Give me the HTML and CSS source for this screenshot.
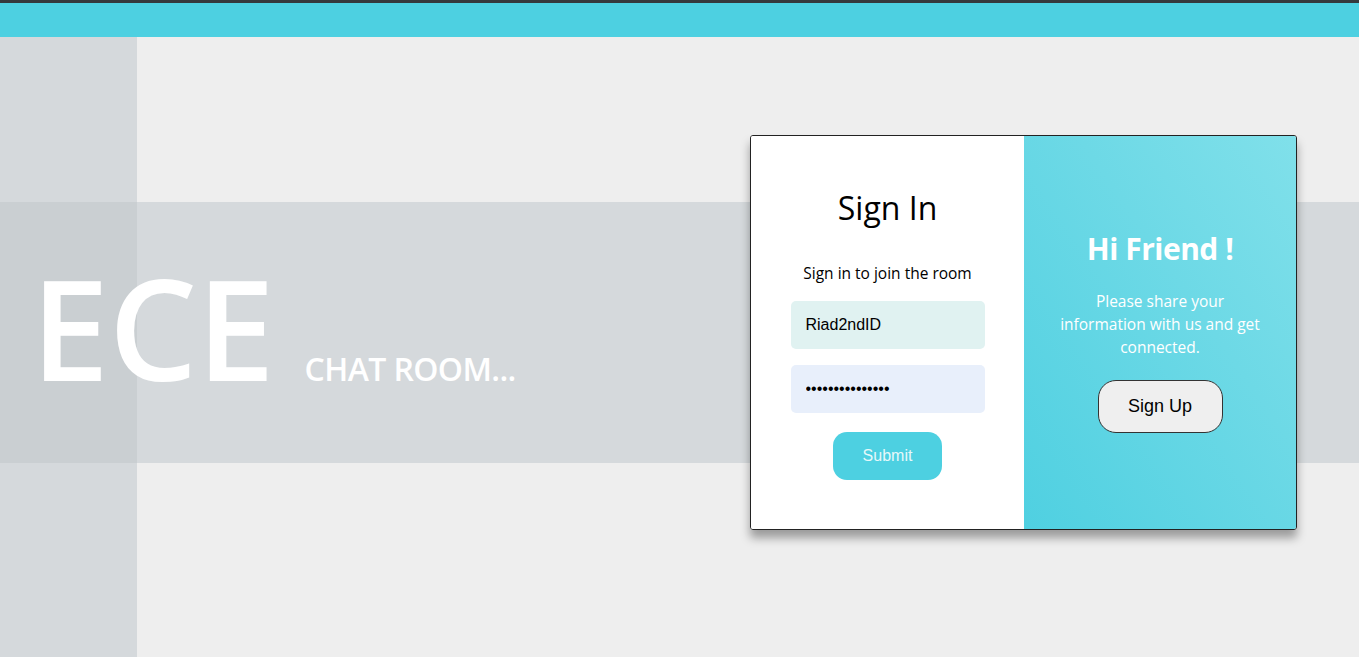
FILE: index.html
```html
<!DOCTYPE html>
<html lang="en">
<head>
<meta charset="utf-8">
<title>ECE Chat Room</title>
<link rel="stylesheet" href="styles.css">
</head>
<body>
<header class="topbar"></header>
<main class="main">
  <div class="hero">
    <span class="hero-big">ECE</span>
    <span class="hero-small">CHAT ROOM...</span>
  </div>
  <div class="card">
    <form class="panel panel-signin">
      <h1 class="signin-title">Sign In</h1>
      <p class="signin-sub">Sign in to join the room</p>
      <input class="field field-user" type="text" value="Riad2ndID">
      <input class="field field-pass" type="password" value="123456789012345">
      <button class="btn-submit" type="button">Submit</button>
    </form>
    <div class="panel panel-signup">
      <h2 class="signup-title">Hi Friend !</h2>
      <p class="signup-text">Please share your information with us and get connected.</p>
      <button class="btn-signup" type="button">Sign Up</button>
    </div>
  </div>
</main>
</body>
</html>
```
FILE: styles.css
```css
* { box-sizing: border-box; }
html, body { margin: 0; padding: 0; height: 100%; }
body {
  font-family: "Open Sans", "Noto Sans", sans-serif;
  background: #eeeeee;
  overflow: hidden;
}
.topbar {
  height: 37px;
  border-top: 3px solid #35393d;
  background: #4dd0e1;
}
.main {
  height: 620px;
  display: flex;
  justify-content: space-between;
  align-items: flex-start;
  padding: 98px 62px 0 31px;
  background:
    linear-gradient(#cacfd2, #cacfd2) 0 165px / 137px 261px no-repeat,
    linear-gradient(#d5d9dc, #d5d9dc) 0 165px / 100% 261px no-repeat,
    linear-gradient(#d5d9dc, #d5d9dc) 0 0 / 137px 100% no-repeat,
    #eeeeee;
}
.hero {
  display: flex;
  align-items: baseline;
  gap: 30px;
  margin-top: 122px;
  color: #ffffff;
  line-height: 1;
}
.hero-big {
  font-size: 140px;
  font-weight: 600;
  letter-spacing: -0.5px;
}
.hero-small {
  font-size: 32px;
  font-weight: 600;
  letter-spacing: -0.6px;
}
.card {
  width: 547px;
  height: 395px;
  display: flex;
  border: 1px solid #222;
  border-radius: 3px;
  overflow: hidden;
  box-shadow: 0 8px 10px rgba(0, 0, 0, 0.35);
}
.panel {
  display: flex;
  flex-direction: column;
  align-items: center;
  justify-content: center;
  margin: 0;
}
.panel-signin {
  width: 273px;
  flex: 0 0 273px;
  padding-top: 4px;
  background: #ffffff;
}
.signin-title {
  margin: 0;
  font-size: 32px;
  font-weight: 500;
  line-height: 38px;
  color: #000;
}
.signin-sub {
  margin: 36px 0 18px;
  font-size: 15.5px;
  line-height: 20px;
  color: #000;
}
.field {
  width: 194px;
  height: 48px;
  border: none;
  border-radius: 5px;
  padding: 0 15px;
  font-family: "Liberation Sans", Arial, sans-serif;
  font-size: 16px;
  color: #000;
  outline: none;
}
.field-user { background: #e0f2f1; }
.field-pass { background: #e8effb; margin-top: 16px; }
.btn-submit {
  margin-top: 19px;
  width: 109px;
  height: 48px;
  border: none;
  border-radius: 14px;
  background: #4dd0e1;
  color: #e6f8fa;
  font-family: "Liberation Sans", Arial, sans-serif;
  font-size: 16px;
}
.panel-signup {
  flex: 1 1 auto;
  background: linear-gradient(to top right, #4fd0e1 0%, #6dd9e6 60%, #80e0ea 100%);
  padding: 0 24px 2px;
  color: #ffffff;
  text-align: center;
}
.signup-title {
  margin: 0;
  font-size: 30px;
  font-weight: 700;
  line-height: 38px;
  letter-spacing: -0.5px;
}
.signup-text {
  margin: 22px 0 21px;
  font-size: 15.5px;
  line-height: 23px;
  max-width: 215px;
}
.btn-signup {
  width: 125px;
  height: 53px;
  border: 1px solid #333;
  border-radius: 18px;
  background: #efefef;
  color: #000;
  font-family: "Liberation Sans", Arial, sans-serif;
  font-size: 18px;
}
```
